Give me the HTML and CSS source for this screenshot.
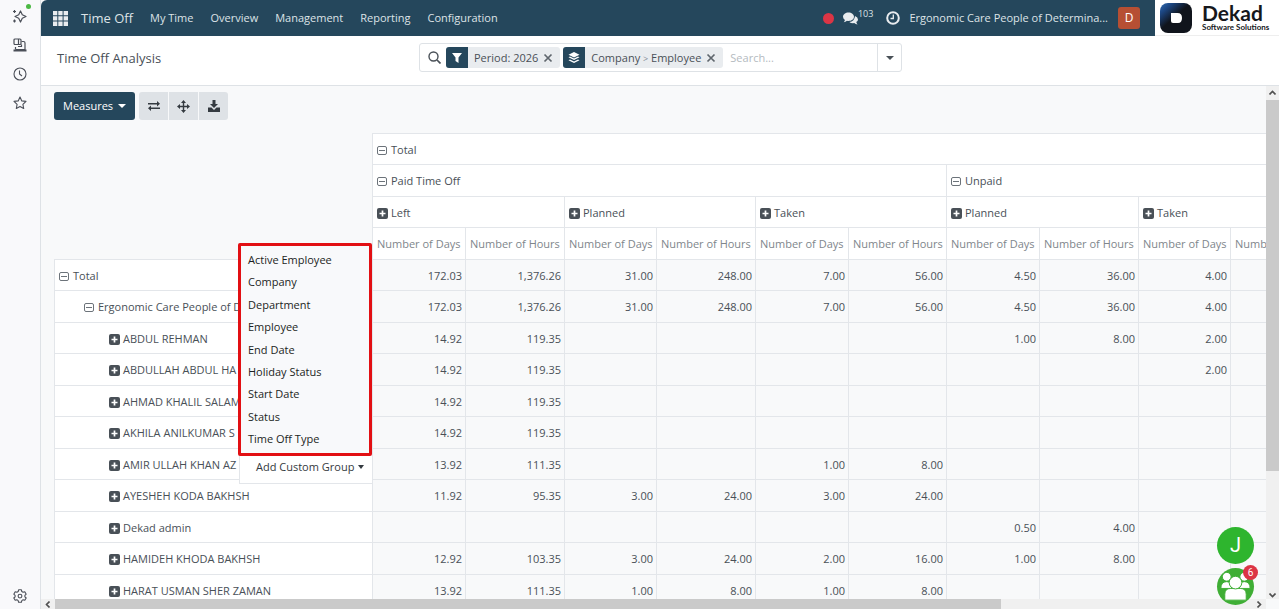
FILE: index.html
```html
<!DOCTYPE html>
<html lang="en">
<head>
<meta charset="utf-8">
<title>Time Off Analysis</title>
<link rel="stylesheet" href="styles.css">
</head>
<body>
<svg class="defs" aria-hidden="true">
  <symbol id="plus" viewBox="0 0 11 11"><rect width="11" height="11" rx="2" fill="#495057"/><path d="M5.500 2.500v6M2.500 5.500h6" stroke="#fff" stroke-width="1.700"/></symbol>
  <symbol id="minus" viewBox="0 0 11 11"><rect x=".5" y="1.500" width="9" height="8" rx="1.500" fill="none" stroke="#6c737a"/><path d="M2 5.500h6" stroke="#6c737a"/></symbol>
  <symbol id="caret" viewBox="0 0 8 4"><path d="M0 0h8L4 4z" fill="currentColor"/></symbol>
  <symbol id="cross" viewBox="0 0 10 10"><path d="M1.500 1.500l7 7M8.500 1.500l-7 7" stroke="#5f666d" stroke-width="1.700"/></symbol>
</svg>
<div class="app">
  <aside class="rail">
    <button class="rail-btn" aria-label="Assistant">
      <svg width="16" height="16" viewBox="0 0 16 16" fill="none" stroke="#4b4f58" stroke-width="1.200" stroke-linejoin="round"><path d="M8.500 3L10.300 6.700L14 8.500L10.300 10.300L8.500 14L6.700 10.300L3 8.500L6.700 6.700z"/><path d="M2.500 2v3M1 3.500h3M2.500 11.500v3M1 13h3"/></svg>
      <span class="online"></span>
    </button>
    <button class="rail-btn" aria-label="Devices">
      <svg width="14" height="14" viewBox="0 0 14 14" fill="none" stroke="#4b4f58" stroke-width="1.200"><rect x="1" y="1" width="7" height="5.500" rx="1"/><path d="M5.500 1v5.500M2.500 9v2.500M8.500 3.500h2q1.500 0 1.500 1.500v6.500H2.500M5 8.500h3.500V6.500"/><path d="M.5 12.500h13" stroke-width="2"/></svg>
    </button>
    <button class="rail-btn" aria-label="History">
      <svg width="14" height="14" viewBox="0 0 14 14" fill="none" stroke="#4b4f58" stroke-width="1.100"><circle cx="7" cy="7" r="6"/><path d="M6.500 3.500V7l2.500 2"/></svg>
    </button>
    <button class="rail-btn" aria-label="Favourites">
      <svg width="14" height="14" viewBox="0 0 14 14" fill="none" stroke="#4b4f58" stroke-width="1.100" stroke-linejoin="round"><path d="M7 1l1.800 3.900 4.200.5-3.100 2.900.8 4.200L7 10.400l-3.700 2.100.8-4.200L1 5.400l4.200-.5z"/></svg>
    </button>
    <button class="rail-btn rail-last" aria-label="Settings">
      <svg width="14" height="14" viewBox="0 0 14 14" fill="none" stroke="#4b4f58" stroke-width="1.100" stroke-linejoin="round"><path d="M5.600.8h2.800l.4 1.700 1.300.8 1.700-.5 1.400 2.400-1.300 1.200v1.400l1.300 1.200-1.400 2.300-1.700-.5-1.300.8-.4 1.700H5.600l-.4-1.700-1.300-.8-1.700.5L.8 9l1.300-1.200V6.400L.8 5.200l1.400-2.400 1.700.5 1.300-.8z"/><circle cx="7" cy="7.100" r="1.900"/></svg>
    </button>
  </aside>

  <main class="main">
    <header class="topbar">
      <nav class="nav">
        <button class="apps" aria-label="Apps">
          <svg width="15" height="15" viewBox="0 0 15 15" fill="#e9ecef"><path d="M0 0h4.300v4.300H0zM5.300 0h4.300v4.300H5.300zM10.600 0H15v4.300h-4.400zM0 5.300h4.300v4.300H0zM5.300 5.300h4.300v4.300H5.300zM10.600 5.300H15v4.300h-4.400zM0 10.600h4.300V15H0zM5.300 10.600h4.300V15H5.300zM10.600 10.600H15V15h-4.400z"/></svg>
        </button>
        <a class="nav-brand" href="#">Time Off</a>
        <a href="#">My Time</a>
        <a href="#">Overview</a>
        <a href="#">Management</a>
        <a href="#">Reporting</a>
        <a href="#">Configuration</a>
      </nav>
      <div class="tray">
        <span class="rec"></span>
        <button class="chat" aria-label="Messages">
          <svg width="15" height="13" viewBox="0 0 15 13" fill="#e9ecef"><path d="M5.500.5C8.500.5 11 2.400 11 4.800S8.500 9 5.500 9q-.8 0-1.500-.2Q2.500 10 .7 10.200q1-.9 1.200-2.300Q0 6.700 0 4.800C0 2.400 2.500.5 5.500.5z"/><path d="M12 4q3 1.200 3 3.400 0 1.700-1.700 2.700.2 1.400 1.200 2.300-1.800-.1-3.300-1.300-3 .4-4.900-1.100Q11.500 9.600 12 4z"/></svg>
          <span class="count">103</span>
        </button>
        <button class="clock" aria-label="Activities">
          <svg width="14" height="14" viewBox="0 0 14 14" fill="none" stroke="#e9ecef" stroke-width="2"><circle cx="7" cy="7" r="5.800"/><path d="M7.300 3.500v4H4.500" stroke-width="1.300"/></svg>
        </button>
        <a class="company" href="#">Ergonomic Care People of Determina...</a>
        <button class="avatar">D</button>
      </div>
      <a class="logo" href="#">
        <svg width="32" height="30" viewBox="0 0 32 30"><defs><linearGradient id="lg" x1="0" y1="0" x2=".75" y2=".8"><stop offset="0" stop-color="#2f6db5"/><stop offset=".25" stop-color="#1c4580"/><stop offset=".6" stop-color="#10141c"/></linearGradient></defs><rect width="32" height="30" rx="8" fill="url(#lg)"/><path d="M11 10h6.500q4.500 0 4.500 5t-4 5h-5q-2 0-2-2z" fill="#fff"/></svg>
        <span class="logo-text"><span class="logo-name">Dekad</span><span class="logo-sub">Software Solutions</span></span>
      </a>
    </header>

    <section class="control">
      <h1>Time Off Analysis</h1>
      <div class="search">
        <svg class="glass" width="13" height="13" viewBox="0 0 13 13" fill="none" stroke="#495057"><circle cx="5.500" cy="5.500" r="4.500" stroke-width="1.400"/><path d="M9 9l3.500 3.500" stroke-width="1.700"/></svg>
        <span class="facet">
          <span class="facet-icon"><svg width="10" height="10" viewBox="0 0 10 10" fill="#fff"><path d="M0 0h10L6.500 4.500V10L3.500 8V4.500z"/></svg></span>
          <span class="facet-label">Period: 2026</span>
          <button class="remove" aria-label="Remove period"><svg width="10" height="10"><use href="#cross"/></svg></button>
        </span>
        <span class="facet">
          <span class="facet-icon"><svg width="12" height="12" viewBox="0 0 12 12" fill="#fff"><path d="M6 0l5.500 2.700L6 5.400.5 2.700z"/><path d="M.5 5.200l1.500-.7L6 6.500l4-2 1.500.7L6 8z"/><path d="M.5 8.200L2 7.500l4 2 4-2 1.500.7L6 11z"/></svg></span>
          <span class="facet-label">Company <small>&gt;</small> Employee</span>
          <button class="remove" aria-label="Remove grouping"><svg width="10" height="10"><use href="#cross"/></svg></button>
        </span>
        <input type="text" aria-label="Search" placeholder="Search...">
        <button class="search-toggle" aria-label="Search options"><svg width="8" height="4"><use href="#caret"/></svg></button>
      </div>
    </section>

    <div class="viewport">
      <div class="content">
        <div class="actions">
          <button class="measures">Measures <svg width="8" height="4"><use href="#caret"/></svg></button>
          <div class="tools">
            <button aria-label="Flip axis"><svg width="12" height="10" viewBox="0 0 12 10" fill="#343a40"><path d="M0 2h9V0l3 2.700-3 2.700V3.500H0zM12 6.500H3V4.600L0 7.300 3 10V8h9z"/></svg></button>
            <button aria-label="Expand all"><svg width="13" height="13" viewBox="0 0 13 13" fill="#343a40"><path d="M6.500 0L9 3H7.200v2.800H10V4l3 2.500L10 9V7.200H7.200V10H9l-2.500 3L4 10h1.800V7.200H3V9L0 6.500 3 4v1.800h2.800V3H4z"/></svg></button>
            <button aria-label="Download"><svg width="12" height="12" viewBox="0 0 12 12" fill="#343a40"><path d="M4.500 0h3v4H10L6 8 2 4h2.500z"/><path d="M0 7.500h3.500L6 10l2.500-2.500H12V12H0z"/></svg></button>
          </div>
        </div>

        <div class="pivot">
          <table>
            <colgroup><col class="c-name"><col class="c-days"><col class="c-hours"><col class="c-days-s"><col class="c-hours"><col class="c-days"><col class="c-hours-s"><col class="c-days"><col class="c-hours"><col class="c-days-s"><col class="c-hours"></colgroup>
            <thead>
              <tr><td class="corner" rowspan="4"></td><th colspan="10"><svg class="tg"><use href="#minus"/></svg>Total</th></tr>
              <tr><th colspan="6"><svg class="tg"><use href="#minus"/></svg>Paid Time Off</th><th colspan="4"><svg class="tg"><use href="#minus"/></svg>Unpaid</th></tr>
              <tr><th colspan="2"><svg class="tg"><use href="#plus"/></svg>Left</th><th colspan="2"><svg class="tg"><use href="#plus"/></svg>Planned</th><th colspan="2"><svg class="tg"><use href="#plus"/></svg>Taken</th><th colspan="2"><svg class="tg"><use href="#plus"/></svg>Planned</th><th colspan="2"><svg class="tg"><use href="#plus"/></svg>Taken</th></tr>
              <tr class="measure"><th>Number of Days</th><th>Number of Hours</th><th>Number of Days</th><th>Number of Hours</th><th>Number of Days</th><th>Number of Hours</th><th>Number of Days</th><th>Number of Hours</th><th>Number of Days</th><th>Number of Hours</th></tr>
            </thead>
            <tbody>
              <tr><th><svg class="tg"><use href="#minus"/></svg>Total</th><td>172.03</td><td>1,376.26</td><td>31.00</td><td>248.00</td><td>7.00</td><td>56.00</td><td>4.50</td><td>36.00</td><td>4.00</td><td></td></tr>
              <tr><th class="l1"><svg class="tg"><use href="#minus"/></svg>Ergonomic Care People of D</th><td>172.03</td><td>1,376.26</td><td>31.00</td><td>248.00</td><td>7.00</td><td>56.00</td><td>4.50</td><td>36.00</td><td>4.00</td><td></td></tr>
              <tr><th class="l2"><svg class="tg"><use href="#plus"/></svg>ABDUL REHMAN</th><td>14.92</td><td>119.35</td><td></td><td></td><td></td><td></td><td>1.00</td><td>8.00</td><td>2.00</td><td></td></tr>
              <tr><th class="l2"><svg class="tg"><use href="#plus"/></svg>ABDULLAH ABDUL HA</th><td>14.92</td><td>119.35</td><td></td><td></td><td></td><td></td><td></td><td></td><td>2.00</td><td></td></tr>
              <tr><th class="l2"><svg class="tg"><use href="#plus"/></svg>AHMAD KHALIL SALAM</th><td>14.92</td><td>119.35</td><td></td><td></td><td></td><td></td><td></td><td></td><td></td><td></td></tr>
              <tr><th class="l2"><svg class="tg"><use href="#plus"/></svg>AKHILA ANILKUMAR S</th><td>14.92</td><td>119.35</td><td></td><td></td><td></td><td></td><td></td><td></td><td></td><td></td></tr>
              <tr><th class="l2"><svg class="tg"><use href="#plus"/></svg>AMIR ULLAH KHAN AZ</th><td>13.92</td><td>111.35</td><td></td><td></td><td>1.00</td><td>8.00</td><td></td><td></td><td></td><td></td></tr>
              <tr><th class="l2"><svg class="tg"><use href="#plus"/></svg>AYESHEH KODA BAKHSH</th><td>11.92</td><td>95.35</td><td>3.00</td><td>24.00</td><td>3.00</td><td>24.00</td><td></td><td></td><td></td><td></td></tr>
              <tr><th class="l2"><svg class="tg"><use href="#plus"/></svg>Dekad admin</th><td></td><td></td><td></td><td></td><td></td><td></td><td>0.50</td><td>4.00</td><td></td><td></td></tr>
              <tr><th class="l2"><svg class="tg"><use href="#plus"/></svg>HAMIDEH KHODA BAKHSH</th><td>12.92</td><td>103.35</td><td>3.00</td><td>24.00</td><td>2.00</td><td>16.00</td><td>1.00</td><td>8.00</td><td></td><td></td></tr>
              <tr><th class="l2"><svg class="tg"><use href="#plus"/></svg>HARAT USMAN SHER ZAMAN</th><td>13.92</td><td>111.35</td><td>1.00</td><td>8.00</td><td>1.00</td><td>8.00</td><td></td><td></td><td></td><td></td></tr>
            </tbody>
          </table>
          <div class="popup">
            <div class="groups">
              <button>Active Employee</button>
              <button>Company</button>
              <button>Department</button>
              <button>Employee</button>
              <button>End Date</button>
              <button>Holiday Status</button>
              <button>Start Date</button>
              <button>Status</button>
              <button>Time Off Type</button>
            </div>
            <button class="custom">Add Custom Group <svg width="6" height="4" viewBox="0 0 8 4" preserveAspectRatio="none"><path d="M0 0h8L4 4z" fill="currentColor"/></svg></button>
          </div>
        </div>
      </div>

      <div class="vbar">
        <svg width="7" height="5" viewBox="0 0 7 5"><path d="M.5 4.500l3-3 3 3" fill="none" stroke="#505050" stroke-width="1.600"/></svg>
        <div class="vtrack"><div class="vthumb"></div></div>
        <svg width="7" height="5" viewBox="0 0 7 5"><path d="M.5.5l3 3 3-3" fill="none" stroke="#505050" stroke-width="1.600"/></svg>
      </div>
      <div class="hbar">
        <svg width="5" height="7" viewBox="0 0 5 7"><path d="M4.500.5l-3 3 3 3" fill="none" stroke="#505050" stroke-width="1.600"/></svg>
        <div class="htrack"><div class="hthumb"></div></div>
        <svg width="5" height="7" viewBox="0 0 5 7"><path d="M.5.5l3 3-3 3" fill="none" stroke="#505050" stroke-width="1.600"/></svg>
      </div>
    </div>
  </main>

  <div class="bubbles">
    <button class="bubble">J</button>
    <button class="bubble team" aria-label="Team chat">
      <svg width="37" height="37" viewBox="0 0 38 38" fill="#fff" stroke="#3fae35" stroke-width="1"><circle cx="10" cy="9" r="4.500"/><circle cx="28" cy="9" r="4.500"/><path d="M4 21q0-7 6-7 5 0 5 7zM23 21q0-7 5-7 6 0 6 7z"/><path d="M8 33v-6q0-6 6-6h10q6 0 6 6v6z"/><circle cx="19" cy="15" r="6.500"/></svg>
      <span class="badge">6</span>
    </button>
  </div>
</div>
</body>
</html>
```
FILE: styles.css
```css
* { box-sizing: border-box; }
html, body { height: 100%; }
body {
  margin: 0;
  overflow: hidden;
  background: #f8f9fa;
  color: #495057;
  font: 11px/18px "Open Sans", "Noto Sans", sans-serif;
}
button, input { font: inherit; color: inherit; border: 0; margin: 0; padding: 0; background: none; }
button { cursor: pointer; }
a { color: inherit; text-decoration: none; }
svg { display: block; flex: none; }
.defs { position: absolute; width: 0; height: 0; }

.app { display: flex; height: 100vh; }
.rail {
  flex: 0 0 40px;
  display: flex;
  flex-direction: column;
  align-items: center;
  gap: 9px;
  padding: 6px 0 3px 0;
  background: #f9f9fb;
}
.rail-btn { position: relative; display: grid; place-items: center; width: 20px; height: 20px; }
.rail-last { margin-top: auto; }
.online { position: absolute; top: -2px; right: -1px; width: 5px; height: 5px; border-radius: 50%; background: #4cb944; }

.main { flex: 1; min-width: 0; display: flex; flex-direction: column; border-left: 1px solid #dee2e6; }

.topbar { display: flex; flex: 0 0 36px; border-radius: 6px 0 0 0; background: #25475c; color: #dde3e7; overflow: hidden; }
.nav { display: flex; align-items: center; gap: 17px; padding-left: 12px; }
.nav-brand { font-size: 13px; margin-left: -4px; }
.tray { display: flex; align-items: center; margin-left: auto; padding-right: 15px; }
.rec { width: 11px; height: 11px; border-radius: 50%; background: #dc3545; }
.chat { display: flex; align-items: center; margin-left: 9px; }
.count { font-size: 9px; line-height: 12px; padding-bottom: 8px; }
.clock { margin: 0 9px 0 13px; }
.avatar { width: 22px; height: 22px; margin-left: 10px; border-radius: 3px; background: #b64f33; color: #fff; font-size: 12px; }
.logo { display: flex; align-items: center; gap: 10px; width: 124px; padding-left: 5px; background: #fff; color: #16181c; border-bottom: 1px solid #eee; }
.logo-text { display: flex; flex-direction: column; }
.logo-name { font: 700 21px/19px Lato, sans-serif; }
.logo-sub { font: 700 8px/10px Lato, sans-serif; white-space: nowrap; }

.control {
  flex: 0 0 50px;
  display: grid;
  grid-template-columns: 378px 483px 1fr;
  align-items: start;
  padding-top: 7px;
  background: #fff;
  border-bottom: 1px solid #dee2e6;
}
h1 { margin: 5px 0 0 16px; font-size: 13px; font-weight: 400; line-height: 20px; }
.search { display: flex; align-items: center; gap: 3px; height: 29px; padding-left: 8px; border: 1px solid #dee2e6; border-radius: 3px; }
.glass { margin-right: 2px; }
.facet { display: flex; align-items: center; height: 21px; border-radius: 3px; background: #e9ecef; overflow: hidden; white-space: nowrap; }
.facet-icon { display: grid; place-items: center; width: 22px; height: 21px; background: #25475c; }
.facet-label { padding: 1px 5px 0 6px; }
.facet-label small { font-size: 9px; color: #868e96; }
.remove { padding-right: 7px; }
.search input { flex: 1; min-width: 0; padding-left: 4px; outline: 0; }
.search input::placeholder { color: #b4bac0; opacity: 1; }
.search-toggle { display: grid; place-items: center; width: 24px; height: 27px; border-left: 1px solid #dee2e6; }

.viewport { flex: 1; min-height: 0; display: grid; grid-template: minmax(0, 1fr) 10px / minmax(0, 1fr) 13px; }
.content { overflow: hidden; padding: 6px 0 0 13px; }
.actions { display: flex; gap: 4px; margin-bottom: 13px; }
.measures { display: flex; align-items: center; gap: 5px; height: 28px; padding: 0 9px; border-radius: 3px; background: #25475c; color: #fff; }
.tools { display: flex; gap: 1px; border-radius: 3px; overflow: hidden; }
.tools button { display: grid; place-items: center; width: 29px; height: 28px; background: #dee2e6; }

.pivot { position: relative; }
table { width: 1276px; table-layout: fixed; border-collapse: collapse; }
.c-name { width: 318px; }
.c-days { width: 93px; }
.c-days-s { width: 92px; }
.c-hours { width: 99px; }
.c-hours-s { width: 98px; }
tr { height: 31px; }
thead tr:nth-child(even), tbody tr:nth-child(even) { height: 32px; }
th, td { padding: 1px 3px 0 4px; border: 1px solid #e3e6ea; white-space: nowrap; overflow: hidden; font-weight: 400; }
th { text-align: left; background: #fff; }
td { text-align: right; background: #f8f9fa; }
.corner { border-top: 0; border-left: 0; }
.measure th { color: #80868c; }
.l1 { padding-left: 29px; }
.l2 { padding-left: 54px; }
.tg { display: inline-block; width: 11px; height: 11px; margin-right: 3px; vertical-align: -2px; }

.popup { position: absolute; top: 110px; left: 184px; width: 134px; }
.groups { display: flex; flex-direction: column; justify-content: space-between; height: 213px; padding: 3px 0; border: 3px solid #e20f13; border-radius: 2px; background: #f8f9fb; }
.groups button { padding-left: 7px; line-height: 22px; text-align: left; color: #1c1f23; }
.custom { display: flex; align-items: center; gap: 4px; width: 100%; height: 28px; margin-left: 1px; padding: 0 0 5px 16px; border: 1px solid #e3e6ea; border-top: 0; background: #fff; color: #343a40; white-space: nowrap; }

.vbar, .hbar { display: flex; align-items: center; background: #f0f0f0; }
.vbar { flex-direction: column; padding: 4px 0 1px; gap: 5px; }
.vtrack { flex: 1; width: 100%; }
.vthumb { height: 76%; background: #cacaca; }
.hbar { gap: 5px; padding: 0 4px; }
.htrack { flex: 1; height: 100%; }
.hthumb { width: 79%; height: 100%; background: #cacaca; }

.bubbles { position: absolute; right: 25px; bottom: 4px; display: flex; flex-direction: column; gap: 4px; }
.bubble { position: relative; width: 37px; height: 37px; border-radius: 50%; background: #2eb52e; color: #fff; font: 20px/37px Roboto, sans-serif; }
.team { background: #3fae35; }
.badge { position: absolute; top: -3px; right: -4px; width: 15px; height: 15px; border-radius: 50%; background: #dc3545; font-size: 10px; line-height: 15px; text-align: center; }
```
